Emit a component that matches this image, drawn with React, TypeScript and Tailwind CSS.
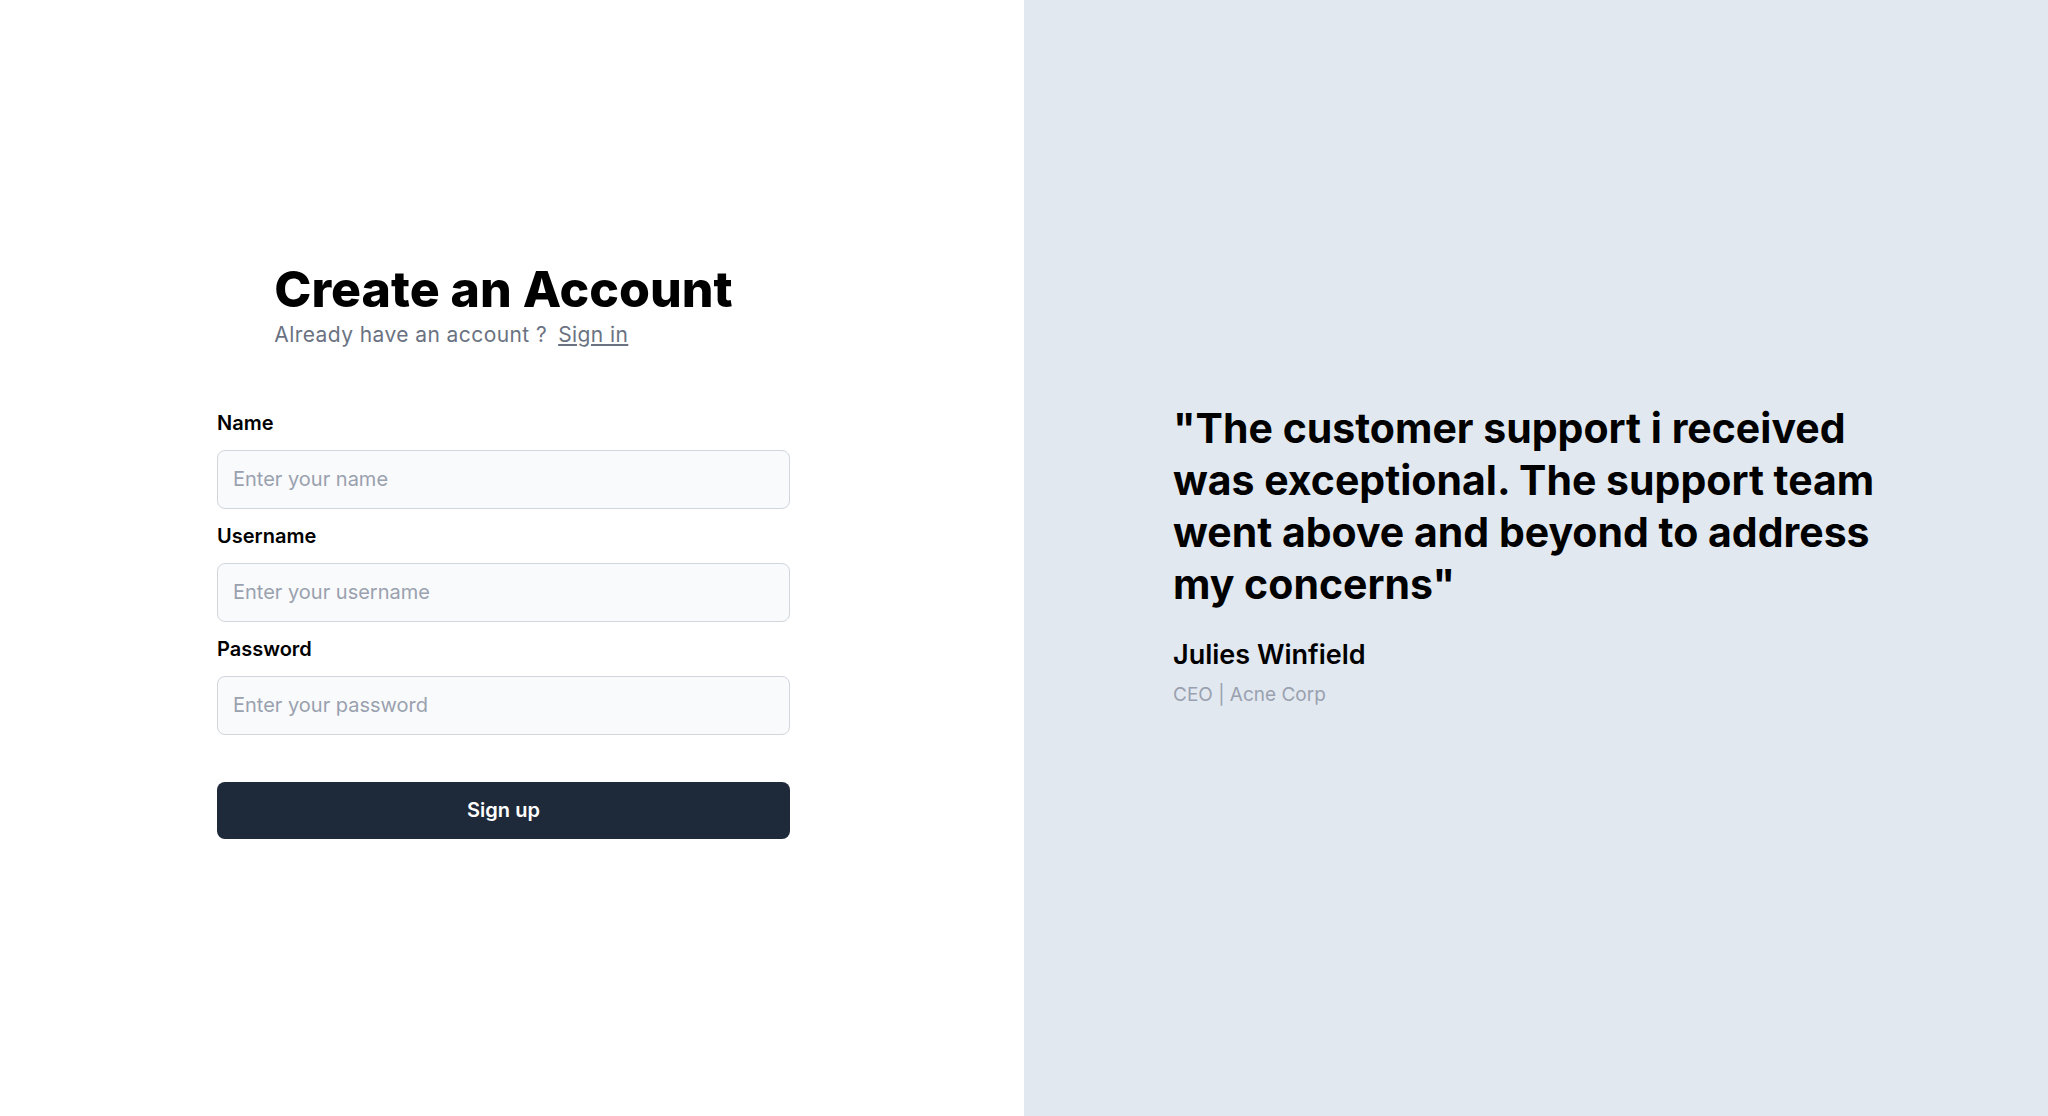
import React from 'react';

const fields = [
  { label: 'Name', placeholder: 'Enter your name', type: 'text' },
  { label: 'Username', placeholder: 'Enter your username', type: 'text' },
  { label: 'Password', placeholder: 'Enter your password', type: 'password' },
];

export default function App() {
  return (
    <div
      className="grid grid-cols-2 w-full h-[1116px] bg-white"
      style={{ fontFamily: 'Inter, "Noto Sans", sans-serif' }}
    >
      <div className="flex flex-col items-center justify-center pr-[17px] pb-[13px]">
        <div className="flex flex-col">
          <h1 className="text-[50px] leading-[48px] font-extrabold text-black">
            Create an Account
          </h1>
          <p className="mt-[8px] text-[21px] leading-7 tracking-[0.02em] text-gray-500">
            Already have an account ?
            <a href="#" className="ml-[11px] underline underline-offset-2">Sign in</a>
          </p>
        </div>

        <form className="mt-[60px] w-[573px] flex flex-col gap-[13px]" onSubmit={e => e.preventDefault()}>
          {fields.map(f => (
            <div key={f.label} className="flex flex-col">
              <label className="h-7 text-xl leading-7 font-semibold text-black">{f.label}</label>
              <input
                type={f.type}
                placeholder={f.placeholder}
                className="mt-[13px] h-[59px] rounded-lg border border-gray-300 bg-gray-50 px-[15px] text-xl text-gray-900 placeholder:text-gray-400 outline-none"
              />
            </div>
          ))}
          <button
            type="submit"
            className="mt-[34px] h-[57px] rounded-lg bg-gray-800 text-white text-xl font-semibold"
          >
            Sign up
          </button>
        </form>
      </div>

      <div className="flex flex-col justify-center bg-[#e2e8f0] px-[149px] pb-[5px]">
        <blockquote className="text-[41px] leading-[52px] font-bold text-black">
          "The customer support i received was exceptional. The support team went above and beyond to address my concerns"
        </blockquote>
        <div className="mt-[29px] text-[27px] leading-8 font-semibold text-black">Julies Winfield</div>
        <div className="mt-[10px] text-[19px] leading-7 text-gray-400">CEO | Acne Corp</div>
      </div>
    </div>
  );
}
